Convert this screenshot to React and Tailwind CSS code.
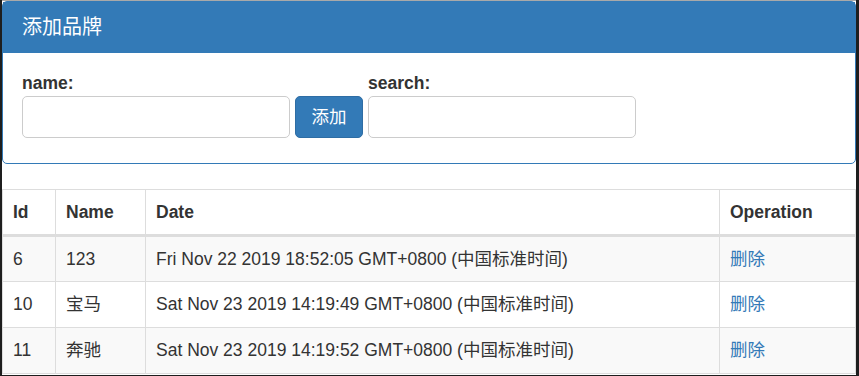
import { useState } from "react";

const rows = [
  { id: 6, name: "123", date: "Fri Nov 22 2019 18:52:05 GMT+0800 (中国标准时间)" },
  { id: 10, name: "宝马", date: "Sat Nov 23 2019 14:19:49 GMT+0800 (中国标准时间)" },
  { id: 11, name: "奔驰", date: "Sat Nov 23 2019 14:19:52 GMT+0800 (中国标准时间)" },
];

export default function App() {
  const [name, setName] = useState("");
  const [keyword, setKeyword] = useState("");

  return (
    <div
      className="bg-[#1e1e1e] pl-[2px] pr-[3px] min-h-[376px] text-[17.5px] leading-[25px] text-[#333]"
      style={{ fontFamily: '"Liberation Sans", Arial, "Noto Sans CJK SC", sans-serif' }}
    >
      <div className="bg-white border-t border-[#a9a9a9] min-h-[375px]">
        {/* PANEL */}
        <div className="border border-[#337ab7] rounded-[5px] mb-[25px]">
          <div className="bg-[#337ab7] text-white h-[51px] px-[19px] flex items-center text-[20px]">
            添加品牌
          </div>
          <div className="px-[19px] pt-[18px] pb-[25px]">
            <div className="flex items-end gap-[5px]">
              <div className="flex flex-col">
                <label className="font-bold">name:</label>
                <input
                  value={name}
                  onChange={(e) => setName(e.target.value)}
                  className="w-[268px] h-[42px] border border-[#ccc] rounded-[5px] px-3 outline-none"
                />
              </div>
              <button className="w-[68px] h-[42px] bg-[#337ab7] border border-[#2e6da4] rounded-[5px] text-white">
                添加
              </button>
              <div className="flex flex-col">
                <label className="font-bold">search:</label>
                <input
                  value={keyword}
                  onChange={(e) => setKeyword(e.target.value)}
                  className="w-[268px] h-[42px] border border-[#ccc] rounded-[5px] px-3 outline-none"
                />
              </div>
            </div>
          </div>
        </div>

        {/* TABLE */}
        <table className="w-full border-collapse table-fixed">
          <thead>
            <tr>
              <th className="w-[53px] border border-[#ddd] border-b-[3px] text-left px-[10px] h-[46px] font-bold">Id</th>
              <th className="w-[90px] border border-[#ddd] border-b-[3px] text-left px-[10px] font-bold">Name</th>
              <th className="w-[574px] border border-[#ddd] border-b-[3px] text-left px-[10px] font-bold">Date</th>
              <th className="border border-[#ddd] border-b-[3px] text-left px-[10px] font-bold">Operation</th>
            </tr>
          </thead>
          <tbody>
            {rows.map((r, i) => (
              <tr key={r.id} className={i % 2 === 0 ? "bg-[#f9f9f9]" : "bg-white"}>
                <td className="border border-[#ddd] px-[10px] h-[46px]">{r.id}</td>
                <td className="border border-[#ddd] px-[10px]">{r.name}</td>
                <td className="border border-[#ddd] px-[10px]">{r.date}</td>
                <td className="border border-[#ddd] px-[10px]">
                  <a href="#" className="text-[#337ab7]">删除</a>
                </td>
              </tr>
            ))}
          </tbody>
        </table>
      </div>
    </div>
  );
}
